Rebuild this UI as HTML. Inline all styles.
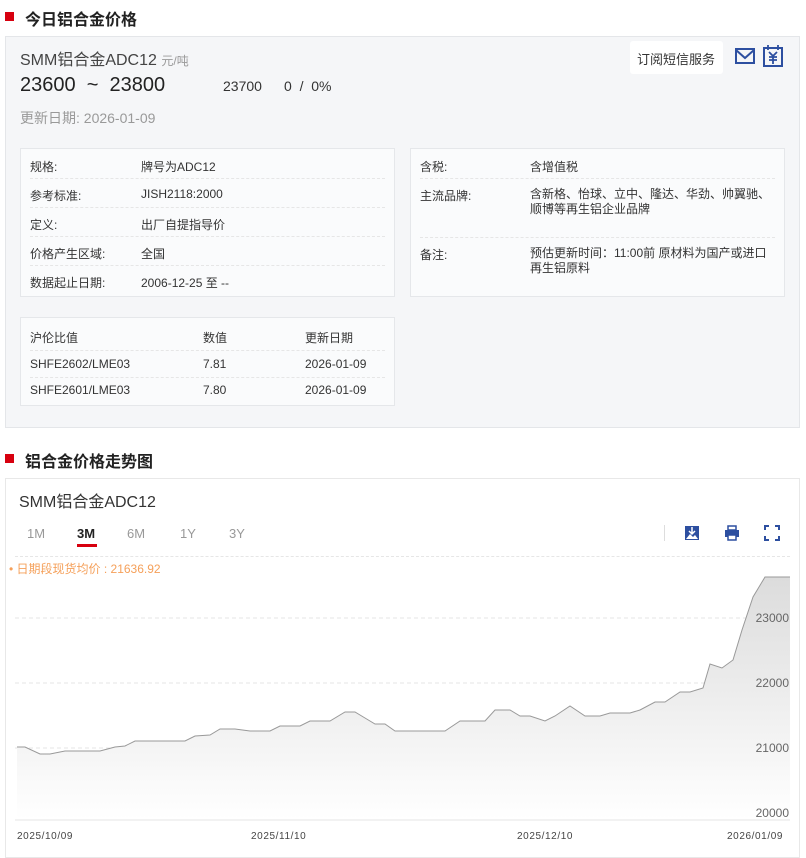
<!DOCTYPE html><html><head><meta charset="utf-8"><style>
*{margin:0;padding:0;box-sizing:border-box}
body{width:806px;height:853px;background:#fff;font-family:"Liberation Sans","Noto Sans CJK SC",sans-serif;color:#333;position:relative;overflow:hidden}
.a{position:absolute;white-space:nowrap}
.h{font-size:16px;font-weight:bold;color:#222}
.sq{position:absolute;width:9px;height:9px;background:#d7000f}
.box{position:absolute;background:#fafbfc;border:1px solid #e5e7ea}
.r{position:absolute;left:9px;right:9px;font-size:12px;color:#333;border-bottom:1px dashed #e6e6e6;height:29px}
.r span{position:absolute;top:8px}
</style></head><body>
<div class="sq" style="left:5px;top:12px"></div>
<div class="a h" style="left:25px;top:6px">今日铝合金价格</div>
<div class="a" style="left:5px;top:36px;width:795px;height:392px;background:#f5f6f8;border:1px solid #e4e6e9"></div>
<div class="a" style="left:20px;top:46px;font-size:16px;color:#444">SMM铝合金ADC12 <span style="font-size:12px;color:#999">元/吨</span></div>
<div class="a" style="left:20px;top:74px;font-size:20px;color:#222">23600 &nbsp;~ &nbsp;23800</div>
<div class="a" style="left:223px;top:78px;font-size:14px;color:#333">23700</div>
<div class="a" style="left:284px;top:78px;font-size:14px;color:#333">0 &nbsp;/ &nbsp;0%</div>
<div class="a" style="left:20px;top:108px;font-size:14px;color:#999">更新日期: 2026-01-09</div>
<div class="a" style="left:630px;top:41px;width:93px;height:33px;background:#fff;border-radius:3px;font-size:13px;color:#333;padding:8px 0 0 7px">订阅短信服务</div>
<svg class="a" style="left:735px;top:47px" width="20" height="18" viewBox="0 0 20 18"><rect x="1" y="2" width="18" height="14" fill="none" stroke="#2d4fa0" stroke-width="2"/><path d="M1 3l9 8 9-8" fill="none" stroke="#2d4fa0" stroke-width="2"/></svg>
<svg class="a" style="left:763px;top:45px" width="20" height="22" viewBox="0 0 20 22"><rect x="1" y="3" width="18" height="18" fill="none" stroke="#2d4fa0" stroke-width="2"/><path d="M5 0v5M15 0v5M6 7l4 4 4-4M10 11v8M6 12h8M6 15h8" fill="none" stroke="#2d4fa0" stroke-width="1.8"/></svg>

<div class="box" style="left:20px;top:148px;width:375px;height:149px">
<div class="r" style="top:1px"><span>规格:</span><span style="left:111px">牌号为ADC12</span></div>
<div class="r" style="top:30px"><span>参考标准:</span><span style="left:111px">JISH2118:2000</span></div>
<div class="r" style="top:59px"><span>定义:</span><span style="left:111px">出厂自提指导价</span></div>
<div class="r" style="top:88px"><span>价格产生区域:</span><span style="left:111px">全国</span></div>
<div class="r" style="top:117px;border:none"><span>数据起止日期:</span><span style="left:111px">2006-12-25 至 --</span></div>
</div>
<div class="box" style="left:410px;top:148px;width:375px;height:149px">
<div class="r" style="top:1px"><span>含税:</span><span style="left:110px">含增值税</span></div>
<div class="r" style="top:30px;height:59px"><span>主流品牌:</span><span style="left:110px;line-height:15px;white-space:normal;width:245px">含新格、怡球、立中、隆达、华劲、帅翼驰、顺博等再生铝企业品牌</span></div>
<div class="r" style="top:89px;border:none"><span>备注:</span><span style="left:110px;line-height:15px;white-space:normal;width:240px">预估更新时间：11:00前 原材料为国产或进口再生铝原料</span></div>
</div>
<div class="box" style="left:20px;top:317px;width:375px;height:89px">
<div class="r" style="top:6px;height:27px"><span style="top:5px">沪伦比值</span><span style="left:173px;top:5px">数值</span><span style="left:275px;top:5px">更新日期</span></div>
<div class="r" style="top:33px;height:27px"><span style="top:6px">SHFE2602/LME03</span><span style="left:173px;top:6px">7.81</span><span style="left:275px;top:6px">2026-01-09</span></div>
<div class="r" style="top:60px;height:27px;border:none"><span style="top:5px">SHFE2601/LME03</span><span style="left:173px;top:5px">7.80</span><span style="left:275px;top:5px">2026-01-09</span></div>
</div>

<div class="sq" style="left:5px;top:454px"></div>
<div class="a h" style="left:25px;top:448px">铝合金价格走势图</div>
<div class="a" style="left:5px;top:478px;width:795px;height:380px;border:1px solid #e8e8e8"></div>
<div class="a" style="left:19px;top:488px;font-size:16px;color:#333">SMM铝合金ADC12</div>
<div class="a" style="left:27px;top:526px;font-size:13px;color:#999">1M</div>
<div class="a" style="left:77px;top:526px;font-size:13px;color:#222;font-weight:bold">3M</div>
<div class="a" style="left:77px;top:544px;width:20px;height:3px;background:#d7000f"></div>
<div class="a" style="left:127px;top:526px;font-size:13px;color:#999">6M</div>
<div class="a" style="left:180px;top:526px;font-size:13px;color:#999">1Y</div>
<div class="a" style="left:229px;top:526px;font-size:13px;color:#999">3Y</div>
<div class="a" style="left:664px;top:525px;width:1px;height:16px;background:#ddd"></div>
<svg class="a" style="left:684px;top:525px" width="16" height="16" viewBox="0 0 16 16"><rect x="1" y="1" width="14" height="14" fill="#2d4fa0"/><path d="M2 14l4-5 3 3 2-2 3 4z" fill="#fff"/><path d="M8 2v6M5 6l3 3 3-3" stroke="#fff" stroke-width="1.5" fill="none"/></svg>
<svg class="a" style="left:724px;top:525px" width="16" height="16" viewBox="0 0 16 16"><rect x="4" y="1" width="8" height="4" fill="none" stroke="#2d4fa0" stroke-width="1.5"/><rect x="1" y="5" width="14" height="7" fill="#2d4fa0"/><rect x="4" y="10" width="8" height="5" fill="#fff" stroke="#2d4fa0" stroke-width="1.5"/></svg>
<svg class="a" style="left:764px;top:525px" width="16" height="16" viewBox="0 0 16 16"><path d="M1 5V1h4M11 1h4v4M15 11v4h-4M5 15H1v-4" fill="none" stroke="#2d4fa0" stroke-width="2"/></svg>
<div class="a" style="left:15px;top:556px;width:775px;border-top:1px dashed #e6e6e6"></div>
<div class="a" style="left:9px;top:560px;font-size:12px;color:#f5a05a">• 日期段现货均价 : 21636.92</div>
<svg class="a" style="left:0;top:560px" width="806" height="293" viewBox="0 560 806 293">
<defs><linearGradient id="g" x1="0" y1="0" x2="0" y2="1"><stop offset="0" stop-color="#dcdcdc"/><stop offset="1" stop-color="#fff"/></linearGradient></defs>
<g stroke="#e6e6e6" stroke-dasharray="4,3"><line x1="15" y1="618" x2="790" y2="618"/><line x1="15" y1="683" x2="790" y2="683"/><line x1="15" y1="748" x2="790" y2="748"/></g>
<path d="M17 747L25 747 40 754 50 754 65 751 100 751 115 747 125 746 135 741 185 741 195 736 210 735 220 729 235 729 250 731 270 731 280 726 300 726 310 721 330 721 345 712 355 712 365 718 375 724 385 724 395 731 445 731 460 721 485 721 495 710 510 710 520 716 530 716 545 721 555 716 570 706 585 716 600 716 610 713 630 713 640 710 655 702 665 702 680 692 690 692 703 688 710 664 722 668 733 660 742 630 753 597 765 577 790 577L790 820 17 820Z" fill="url(#g)"/>
<path d="M17 747L25 747 40 754 50 754 65 751 100 751 115 747 125 746 135 741 185 741 195 736 210 735 220 729 235 729 250 731 270 731 280 726 300 726 310 721 330 721 345 712 355 712 365 718 375 724 385 724 395 731 445 731 460 721 485 721 495 710 510 710 520 716 530 716 545 721 555 716 570 706 585 716 600 716 610 713 630 713 640 710 655 702 665 702 680 692 690 692 703 688 710 664 722 668 733 660 742 630 753 597 765 577 790 577" fill="none" stroke="#999" stroke-width="1"/>
<line x1="15" y1="820" x2="790" y2="820" stroke="#e6e6e6"/>
<g font-family="Liberation Sans,sans-serif" font-size="12" fill="#666" text-anchor="end"><text x="789" y="622">23000</text><text x="789" y="687">22000</text><text x="789" y="752">21000</text><text x="789" y="817">20000</text></g>
<g font-family="Liberation Sans,sans-serif" font-size="10" fill="#444" letter-spacing="0.6"><text x="17" y="839">2025/10/09</text><text x="251" y="839">2025/11/10</text><text x="517" y="839">2025/12/10</text><text x="727" y="839">2026/01/09</text></g>
</svg>
</body></html>
